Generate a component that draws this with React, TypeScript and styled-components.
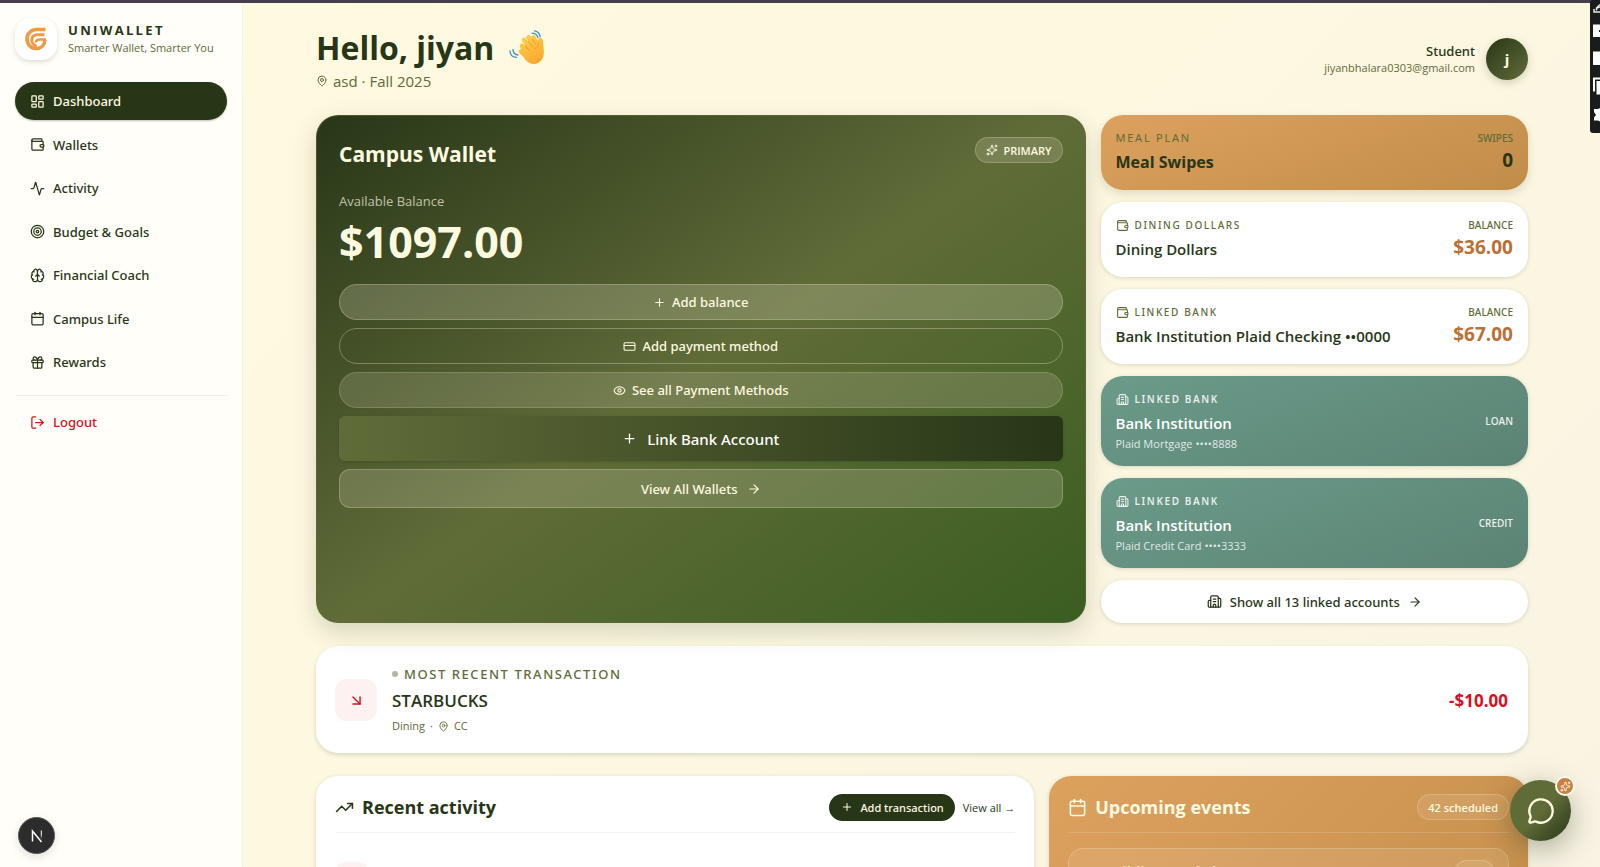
import React from 'react';
import styled, { createGlobalStyle, css } from 'styled-components';
import {
  Activity, ArrowDownRight, ArrowRight, Brain, Building2, Calendar, CreditCard, Eye, Gift,
  LayoutDashboard, LogOut, MapPin, MessageCircle, Plus, Sparkles, Target, TrendingUp, Wallet,
} from 'lucide-react';

const c = {
  forest: '#283618',
  moss: '#606c38',
  cream: '#fefae0',
  sand: '#dda15e',
  red: '#d5101f',
  line: '#f3f3ee',
};

const medium = css`
  font-family: 'Noto Sans', sans-serif;
  font-weight: 500;
`;

const Global = createGlobalStyle`
  *, *::before, *::after { box-sizing: border-box; }
  body { margin: 0; font-family: 'Open Sans', 'Noto Sans', sans-serif; color: ${c.forest}; }
  h1, h2, h3, p, ul { margin: 0; padding: 0; }
  ul { list-style: none; }
  button { font-family: inherit; cursor: pointer; border: 0; padding: 0; }
  a { color: inherit; text-decoration: none; }
  svg { flex: none; display: block; }
`;

const Shell = styled.div`
  display: flex;
  height: 100vh;
  overflow: hidden;
  border-top: 3px solid #463f4b;
  background: linear-gradient(135deg, #fefae0 0%, #fdf8e0 50%, #f9f3e3 100%);
`;

/* Sidebar */
const Sidebar = styled.aside`
  flex: 0 0 243px;
  padding: 15px 15px 0 15px;
  background: #fffef9;
  border-right: 1px solid #f4f2e0;
`;
const Brand = styled.a`
  display: flex;
  align-items: center;
  gap: 11px;
`;
const LogoBox = styled.span`
  display: grid;
  place-items: center;
  width: 42px;
  height: 42px;
  border-radius: 15px;
  background: #fff;
  box-shadow: 0 2px 5px rgba(40, 54, 24, 0.16);
`;
const BrandName = styled.strong`
  display: block;
  font-size: 13px;
  line-height: 17px;
  letter-spacing: 0.18em;
`;
const BrandTag = styled.span`
  display: block;
  font-size: 11px;
  line-height: 17px;
  color: ${c.moss};
  white-space: nowrap;
`;
const NavList = styled.ul`
  display: flex;
  flex-direction: column;
  justify-content: space-between;
  height: 299px;
  margin-top: 22px;
`;
const NavLink = styled.a<{ $active?: boolean; $danger?: boolean }>`
  display: flex;
  align-items: center;
  gap: 8px;
  height: 38px;
  padding: 0 15px;
  border-radius: 19px;
  font-size: 13px;
  ${medium}
  color: ${p => (p.$active ? c.cream : p.$danger ? c.red : c.forest)};
  ${p => p.$active && css`
    background: ${c.forest};
    box-shadow: 0 1px 2px rgba(40, 54, 24, 0.3);
  `}
`;
const Logout = styled.div`
  margin-top: 14px;
  padding-top: 7px;
  border-top: 1px solid #f0efea;
`;

/* Page */
const Main = styled.main`
  flex: 1;
  min-width: 0;
  padding: 23px 72px 0 73px;
`;
const Header = styled.header`
  display: flex;
  justify-content: space-between;
  align-items: center;
  margin-bottom: 23px;
`;
const Greeting = styled.h1`
  display: flex;
  align-items: center;
  gap: 15px;
  font-size: 32px;
  line-height: 44px;
  font-weight: 700;
`;
const Term = styled.p`
  display: flex;
  align-items: center;
  gap: 5px;
  font-size: 15px;
  line-height: 22px;
  color: ${c.moss};
`;
const User = styled.div`
  display: flex;
  align-items: center;
  gap: 11px;
  text-align: right;
`;
const UserRole = styled.p`
  font-size: 13px;
  line-height: 18px;
  ${medium}
`;
const UserMail = styled.p`
  font-size: 11px;
  line-height: 16px;
  color: ${c.moss};
`;
const Avatar = styled.span`
  display: grid;
  place-items: center;
  width: 42px;
  height: 42px;
  border-radius: 50%;
  font-size: 15px;
  font-weight: 700;
  color: ${c.cream};
  background: linear-gradient(135deg, ${c.forest}, ${c.moss});
  box-shadow: 0 3px 8px rgba(40, 54, 24, 0.2);
`;

const TopGrid = styled.section`
  display: grid;
  grid-template-columns: 9fr 5fr;
  gap: 15px;
`;
const Campus = styled.article`
  padding: 21px 22px;
  border: 1px solid rgba(96, 108, 56, 0.6);
  border-radius: 22px;
  color: ${c.cream};
  background: linear-gradient(145deg, ${c.forest} 0%, ${c.moss} 50%, #3a5d22 100%) border-box;
  box-shadow: 0 9px 24px rgba(40, 54, 24, 0.18);
`;
const CampusHead = styled.div`
  display: flex;
  justify-content: space-between;
  align-items: flex-start;
`;
const CampusTitle = styled.h2`
  font-size: 21px;
  line-height: 34px;
  font-weight: 700;
`;
const Chip = styled.span<{ $dim?: boolean }>`
  display: inline-flex;
  align-items: center;
  gap: 5px;
  min-width: 41px;
  height: 26px;
  padding: 0 10px;
  border: 1px solid rgba(254, 250, 224, 0.22);
  border-radius: 13px;
  background: rgba(254, 250, 224, ${p => (p.$dim ? 0.1 : 0.16)});
  color: ${c.cream};
  font-size: 11px;
  font-weight: 600;
`;
const BalanceLabel = styled.p`
  margin-top: 20px;
  font-size: 13px;
  line-height: 20px;
  color: rgba(254, 250, 224, 0.7);
`;
const Balance = styled.p`
  margin-top: 1px;
  font-size: 43px;
  line-height: 60px;
  font-weight: 700;
`;
const Actions = styled.div`
  display: grid;
  gap: 8px;
  margin-top: 12px;
`;
const Action = styled.button<{ $kind: 'solid' | 'outline' | 'soft' | 'bank' | 'wide' }>`
  display: flex;
  align-items: center;
  justify-content: center;
  gap: 6px;
  height: 36px;
  border: 1px solid rgba(254, 250, 224, 0.22);
  border-radius: 18px;
  font-size: 13px;
  ${medium}
  color: ${c.cream};
  background: transparent;
  ${p => p.$kind === 'solid' && css`background: rgba(254, 250, 224, 0.2);`}
  ${p => p.$kind === 'outline' && css`border-color: rgba(254, 250, 224, 0.3);`}
  ${p => p.$kind === 'soft' && css`
    background: rgba(254, 250, 224, 0.14);
    border-color: rgba(254, 250, 224, 0.16);
  `}
  ${p => p.$kind === 'bank' && css`
    gap: 10px;
    height: 45px;
    border: 0;
    border-radius: 6px;
    font-size: 15px;
    color: #fff;
    background: linear-gradient(90deg, ${c.moss}, ${c.forest});
    box-shadow: 0 1px 3px rgba(40, 54, 24, 0.3);
  `}
  ${p => p.$kind === 'wide' && css`
    gap: 9px;
    height: 39px;
    border-radius: 11px;
    background: rgba(254, 250, 224, 0.17);
  `}
`;

const Stack = styled.div`
  display: flex;
  flex-direction: column;
  gap: 12px;
`;
const Account = styled.article<{ $tone: 'sand' | 'white' | 'teal' }>`
  display: flex;
  justify-content: space-between;
  align-items: ${p => (p.$tone === 'teal' ? 'center' : 'flex-start')};
  padding: 15px;
  border-radius: 22px;
  background: #fff;
  box-shadow: 0 1px 4px rgba(40, 54, 24, 0.16);
  ${p => p.$tone === 'sand' && css`
    background: linear-gradient(160deg, ${c.sand}, #c18c4a);
    box-shadow: 0 4px 10px rgba(40, 54, 24, 0.14);
  `}
  ${p => p.$tone === 'teal' && css`
    background: linear-gradient(160deg, #6b9b8a, #5b8374);
    color: #fff;
  `}
`;
const Eyebrow = styled.p<{ $size?: 'md' | 'lg'; $light?: boolean }>`
  display: flex;
  align-items: center;
  gap: 6px;
  font-size: 10px;
  line-height: 16px;
  ${medium}
  letter-spacing: 0.16em;
  text-transform: uppercase;
  color: ${p => (p.$light ? 'rgba(255, 255, 255, 0.85)' : c.moss)};
  ${p => p.$light && css`font-weight: 600;`}
  ${p => p.$size === 'md' && css`font-size: 11px; font-weight: 400;`}
  ${p => p.$size === 'lg' && css`font-size: 13px; line-height: 18px; letter-spacing: 0.12em;`}
`;
const AccountName = styled.h3<{ $large?: boolean }>`
  margin-top: 5px;
  font-size: ${p => (p.$large ? 16 : 15)}px;
  line-height: 22px;
  font-weight: ${p => (p.$large ? 700 : 600)};
`;
const AccountSub = styled.p`
  margin-top: 2px;
  font-size: 11px;
  line-height: 15px;
  color: rgba(255, 255, 255, 0.82);
`;
const Figure = styled.div`
  text-align: right;
`;
const FigureLabel = styled.p`
  font-size: 10px;
  line-height: 16px;
  ${medium}
  color: ${c.moss};
`;
const FigureValue = styled.p<{ $dark?: boolean }>`
  font-size: 19px;
  line-height: 29px;
  font-weight: 700;
  color: ${p => (p.$dark ? c.forest : '#bb7035')};
`;
const Kind = styled.span`
  font-size: 10px;
  font-weight: 600;
  color: rgba(255, 255, 255, 0.88);
`;
const ShowAll = styled.button`
  display: flex;
  align-items: center;
  justify-content: center;
  gap: 8px;
  height: 43px;
  border-radius: 22px;
  background: #fff;
  color: ${c.forest};
  font-size: 13px;
  ${medium}
  box-shadow: 0 1px 4px rgba(40, 54, 24, 0.16);
`;

const Latest = styled.section`
  display: flex;
  align-items: center;
  gap: 15px;
  margin: 23px 0;
  padding: 19px 20px 18px 19px;
  border-radius: 22px;
  background: #fff;
  box-shadow: 0 2px 4px rgba(40, 54, 24, 0.16);
`;
const IconTile = styled.span<{ $size: number }>`
  display: grid;
  place-items: center;
  width: ${p => p.$size}px;
  height: ${p => p.$size}px;
  border-radius: 11px;
  background: #fef1f1;
  color: ${c.red};
`;
const LatestBody = styled.div`
  flex: 1;
`;
const LatestName = styled.h3`
  margin-top: 6px;
  font-size: 17px;
  line-height: 24px;
  font-weight: 600;
`;
const LatestMeta = styled.p`
  display: flex;
  align-items: center;
  gap: 5px;
  margin-top: 4px;
  font-size: 11px;
  line-height: 18px;
  color: ${c.moss};
`;
const Dot = styled.i`
  width: 6px;
  height: 6px;
  border-radius: 50%;
  background: #b2b6a3;
`;
const Amount = styled.strong`
  font-size: 17px;
  font-weight: 700;
  color: ${c.red};
`;

const BottomGrid = styled.section`
  display: grid;
  grid-template-columns: 3fr 2fr;
  gap: 15px;
`;
const Panel = styled.article<{ $sand?: boolean }>`
  padding: 18px 19px;
  min-height: 300px;
  border-radius: 22px;
  background: ${p => (p.$sand ? `linear-gradient(135deg, ${c.sand}, #c18c4a)` : '#fff')};
  color: ${p => (p.$sand ? c.cream : c.forest)};
  box-shadow: 0 1px 5px rgba(40, 54, 24, 0.14);
`;
const PanelHead = styled.div<{ $sand?: boolean }>`
  display: flex;
  align-items: center;
  gap: 8px;
  height: 39px;
  padding-bottom: 12px;
  border-bottom: 1px solid ${p => (p.$sand ? 'rgba(254, 250, 224, 0.16)' : c.line)};
`;
const PanelTitle = styled.h2`
  flex: 1;
  display: flex;
  align-items: center;
  gap: 8px;
  font-size: 18px;
  line-height: 27px;
  font-weight: 700;
`;
const AddButton = styled.button`
  display: flex;
  align-items: center;
  gap: 7px;
  height: 27px;
  padding: 0 11px 0 12px;
  border-radius: 14px;
  background: ${c.forest};
  color: ${c.cream};
  font-size: 11px;
  ${medium}
`;
const ViewAll = styled.a`
  font-size: 11px;
  color: ${c.forest};
`;
const ActivityRow = styled.div`
  padding-top: 29px;
`;
const EventCard = styled.div`
  display: flex;
  justify-content: space-between;
  margin-top: 15px;
  padding: 11px 13px 24px 34px;
  border: 1px solid rgba(254, 250, 224, 0.2);
  border-radius: 15px;
  background: rgba(254, 250, 224, 0.1);
  font-size: 15px;
  line-height: 22px;
  font-weight: 600;
`;

/* Floating controls */
const Chat = styled.button`
  position: fixed;
  right: 29px;
  bottom: 26px;
  display: grid;
  place-items: center;
  width: 61px;
  height: 61px;
  border-radius: 50%;
  color: ${c.cream};
  background: linear-gradient(135deg, ${c.moss} 0%, ${c.moss} 50%, ${c.forest} 100%);
  box-shadow: 0 8px 30px rgba(40, 54, 24, 0.38);
`;
const ChatBadge = styled.span`
  position: absolute;
  top: -4px;
  right: -4px;
  display: grid;
  place-items: center;
  width: 20px;
  height: 20px;
  border: 2px solid #fdf8ee;
  border-radius: 50%;
  background: #c87f45;
`;
const DevBadge = styled.button`
  position: fixed;
  left: 18px;
  bottom: 13px;
  display: grid;
  place-items: center;
  width: 37px;
  height: 37px;
  border: 1px solid #555;
  border-radius: 50%;
  background: #2c2c2c;
  box-shadow: 0 3px 10px rgba(0, 0, 0, 0.12);
`;
const EdgeTools = styled.div`
  position: fixed;
  top: 0;
  right: 0;
  width: 10px;
  height: 133px;
  border-radius: 3px 0 0 3px;
  background: #1b1a1c;
  overflow: hidden;
`;

const nav = [
  ['Dashboard', LayoutDashboard], ['Wallets', Wallet], ['Activity', Activity], ['Budget & Goals', Target],
  ['Financial Coach', Brain], ['Campus Life', Calendar], ['Rewards', Gift],
] as const;

const Logo = () => (
  <svg width="24" height="26" viewBox="0 0 24 26" fill="none" stroke="#f19a45" strokeLinecap="butt">
    <path d="M21.500 3.500H13C7 3.500 3 7.500 3 13s4 9.500 9 9.500 8.700-3.500 9-8.500" strokeWidth="3.600" />
    <path d="M20.500 8.700h-7C10 8.700 7.700 10.800 7.700 14c0 2.600 1.800 5 4.800 6.500" strokeWidth="3" />
    <path d="M22 13.500h-6.500c-2.200 0-3.500 1.200-3.500 3" strokeWidth="2.600" />
  </svg>
);

const WavingHand = () => (
  <svg width="36" height="36" viewBox="0 0 36 36" role="img" aria-label="waving hand">
    <defs>
      <linearGradient id="skin" gradientUnits="userSpaceOnUse" x1="14" y1="6" x2="30" y2="34">
        <stop offset="0" stopColor="#ffd04a" />
        <stop offset="1" stopColor="#f9a52c" />
      </linearGradient>
    </defs>
    <g stroke="url(#skin)" strokeLinecap="round" strokeWidth="4.600" fill="none">
      <path d="M13 16 19 24" />
      <path d="M15 10 23 20" />
      <path d="M19.500 7.300 27 18" />
      <path d="M24.500 7.500 30 18" />
      <path d="M12 21.500 19 28" />
    </g>
    <path d="M12 18 22 11l6 3 1-4c1-3 5-2.500 5 1 0 3 .500 5 .800 9 .500 6-1.500 10.500-5 12.500-5 3-10 1.500-14-3.500z" fill="url(#skin)" />
    <g stroke="#e8932a" strokeWidth="0.900" strokeLinecap="round" fill="none">
      <path d="M16.500 15.500 20 20.500M19.500 11.500 23.500 17M23.500 9.500 26.500 14M30 13c-1.500 3-1.500 4-4.500 6" />
    </g>
    <g stroke="#3d8fc4" strokeWidth="1.300" strokeLinecap="round" fill="none">
      <path d="M23 3.200c3 0 5 1.500 6 4.500M25.500.8c3 .500 5.200 2.600 5.700 6M4 19.500c0 3 2 5 5 5.500M1 21c0 4 3 6.300 6.500 6.300" />
    </g>
  </svg>
);

export default function App() {
  return (
    <>
      <Global />
      <Shell>
        <Sidebar>
          <Brand href="#home">
            <LogoBox><Logo /></LogoBox>
            <span>
              <BrandName>UNIWALLET</BrandName>
              <BrandTag>Smarter Wallet, Smarter You</BrandTag>
            </span>
          </Brand>
          <nav>
            <NavList>
              {nav.map(([label, Icon], i) => (
                <li key={label}>
                  <NavLink href="#nav" $active={i === 0}><Icon size={15} />{label}</NavLink>
                </li>
              ))}
            </NavList>
            <Logout><NavLink href="#logout" $danger><LogOut size={15} />Logout</NavLink></Logout>
          </nav>
        </Sidebar>

        <Main>
          <Header>
            <div>
              <Greeting>Hello, jiyan <WavingHand /></Greeting>
              <Term><MapPin size={12} />asd · Fall 2025</Term>
            </div>
            <User>
              <div>
                <UserRole>Student</UserRole>
                <UserMail>jiyanbhalara0303@gmail.com</UserMail>
              </div>
              <Avatar>j</Avatar>
            </User>
          </Header>

          <TopGrid>
            <Campus>
              <CampusHead>
                <CampusTitle>Campus Wallet</CampusTitle>
                <Chip><Sparkles size={12} />PRIMARY</Chip>
              </CampusHead>
              <BalanceLabel>Available Balance</BalanceLabel>
              <Balance>$1097.00</Balance>
              <Actions>
                <Action $kind="solid"><Plus size={13} />Add balance</Action>
                <Action $kind="outline"><CreditCard size={13} />Add payment method</Action>
                <Action $kind="soft"><Eye size={13} />See all Payment Methods</Action>
                <Action $kind="bank"><Plus size={15} />Link Bank Account</Action>
                <Action $kind="wide">View All Wallets<ArrowRight size={14} /></Action>
              </Actions>
            </Campus>

            <Stack>
              <Account $tone="sand">
                <div>
                  <Eyebrow $size="md">Meal plan</Eyebrow>
                  <AccountName $large>Meal Swipes</AccountName>
                </div>
                <Figure>
                  <FigureLabel>SWIPES</FigureLabel>
                  <FigureValue $dark>0</FigureValue>
                </Figure>
              </Account>
              <Account $tone="white">
                <div>
                  <Eyebrow><Wallet size={13} />Dining dollars</Eyebrow>
                  <AccountName>Dining Dollars</AccountName>
                </div>
                <Figure>
                  <FigureLabel>BALANCE</FigureLabel>
                  <FigureValue>$36.00</FigureValue>
                </Figure>
              </Account>
              <Account $tone="white">
                <div>
                  <Eyebrow><Wallet size={13} />Linked bank</Eyebrow>
                  <AccountName>Bank Institution Plaid Checking ••0000</AccountName>
                </div>
                <Figure>
                  <FigureLabel>BALANCE</FigureLabel>
                  <FigureValue>$67.00</FigureValue>
                </Figure>
              </Account>
              <Account $tone="teal">
                <div>
                  <Eyebrow $light><Building2 size={13} />Linked bank</Eyebrow>
                  <AccountName>Bank Institution</AccountName>
                  <AccountSub>Plaid Mortgage ••••8888</AccountSub>
                </div>
                <Kind>LOAN</Kind>
              </Account>
              <Account $tone="teal">
                <div>
                  <Eyebrow $light><Building2 size={13} />Linked bank</Eyebrow>
                  <AccountName>Bank Institution</AccountName>
                  <AccountSub>Plaid Credit Card ••••3333</AccountSub>
                </div>
                <Kind>CREDIT</Kind>
              </Account>
              <ShowAll><Building2 size={15} />Show all 13 linked accounts<ArrowRight size={14} /></ShowAll>
            </Stack>
          </TopGrid>

          <Latest>
            <IconTile $size={42}><ArrowDownRight size={17} /></IconTile>
            <LatestBody>
              <Eyebrow $size="lg"><Dot />Most recent transaction</Eyebrow>
              <LatestName>STARBUCKS</LatestName>
              <LatestMeta>Dining <span>·</span> <MapPin size={11} /> CC</LatestMeta>
            </LatestBody>
            <Amount>-$10.00</Amount>
          </Latest>

          <BottomGrid>
            <Panel>
              <PanelHead>
                <PanelTitle><TrendingUp size={19} />Recent activity</PanelTitle>
                <AddButton><Plus size={12} />Add transaction</AddButton>
                <ViewAll href="#activity">View all →</ViewAll>
              </PanelHead>
              <ActivityRow><IconTile $size={34}><ArrowDownRight size={15} /></IconTile></ActivityRow>
            </Panel>
            <Panel $sand>
              <PanelHead $sand>
                <PanelTitle><Calendar size={19} />Upcoming events</PanelTitle>
                <Chip $dim>42 scheduled</Chip>
              </PanelHead>
              <EventCard>Building Workshop<Chip $dim /></EventCard>
            </Panel>
          </BottomGrid>
        </Main>
      </Shell>

      <DevBadge aria-label="Developer tools">
        <svg width="14" height="14" viewBox="0 0 14 14" fill="none" strokeWidth="1.500">
          <defs>
            <linearGradient id="fade" x1="0" y1="0" x2="0" y2="1">
              <stop offset="0.5" stopColor="#fff" />
              <stop offset="1" stopColor="#fff" stopOpacity="0.2" />
            </linearGradient>
          </defs>
          <path d="M2.500 12.500V2L11.500 13" stroke="#fff" />
          <path d="M10.800 1.500h1v8h-1z" fill="url(#fade)" />
        </svg>
      </DevBadge>
      <Chat aria-label="Open chat">
        <MessageCircle size={28} />
        <ChatBadge><Sparkles size={11} /></ChatBadge>
      </Chat>
      <EdgeTools aria-hidden="true">
        <svg width="10" height="133" viewBox="0 0 10 133">
          <g fill="none" stroke="#e8e8e8" strokeWidth="1.500">
            <path d="M10 4.500 6.500 8v2.500M4 9v3h6M7 8l3-1" />
          </g>
          <g fill="#fff">
            <path d="M3 24.500h7v12.500H3zM3 51.500h7V65H3zM3 77.500h7v2H5v12H3zM6.500 81h3.500v13.500H6.500zM4 109h4l2-1v13.500l-2-1H4v-3l2-2.500-2-3z" />
          </g>
          <path d="M9 30h1v2H9z" fill="#1b1a1c" />
        </svg>
      </EdgeTools>
    </>
  );
}
